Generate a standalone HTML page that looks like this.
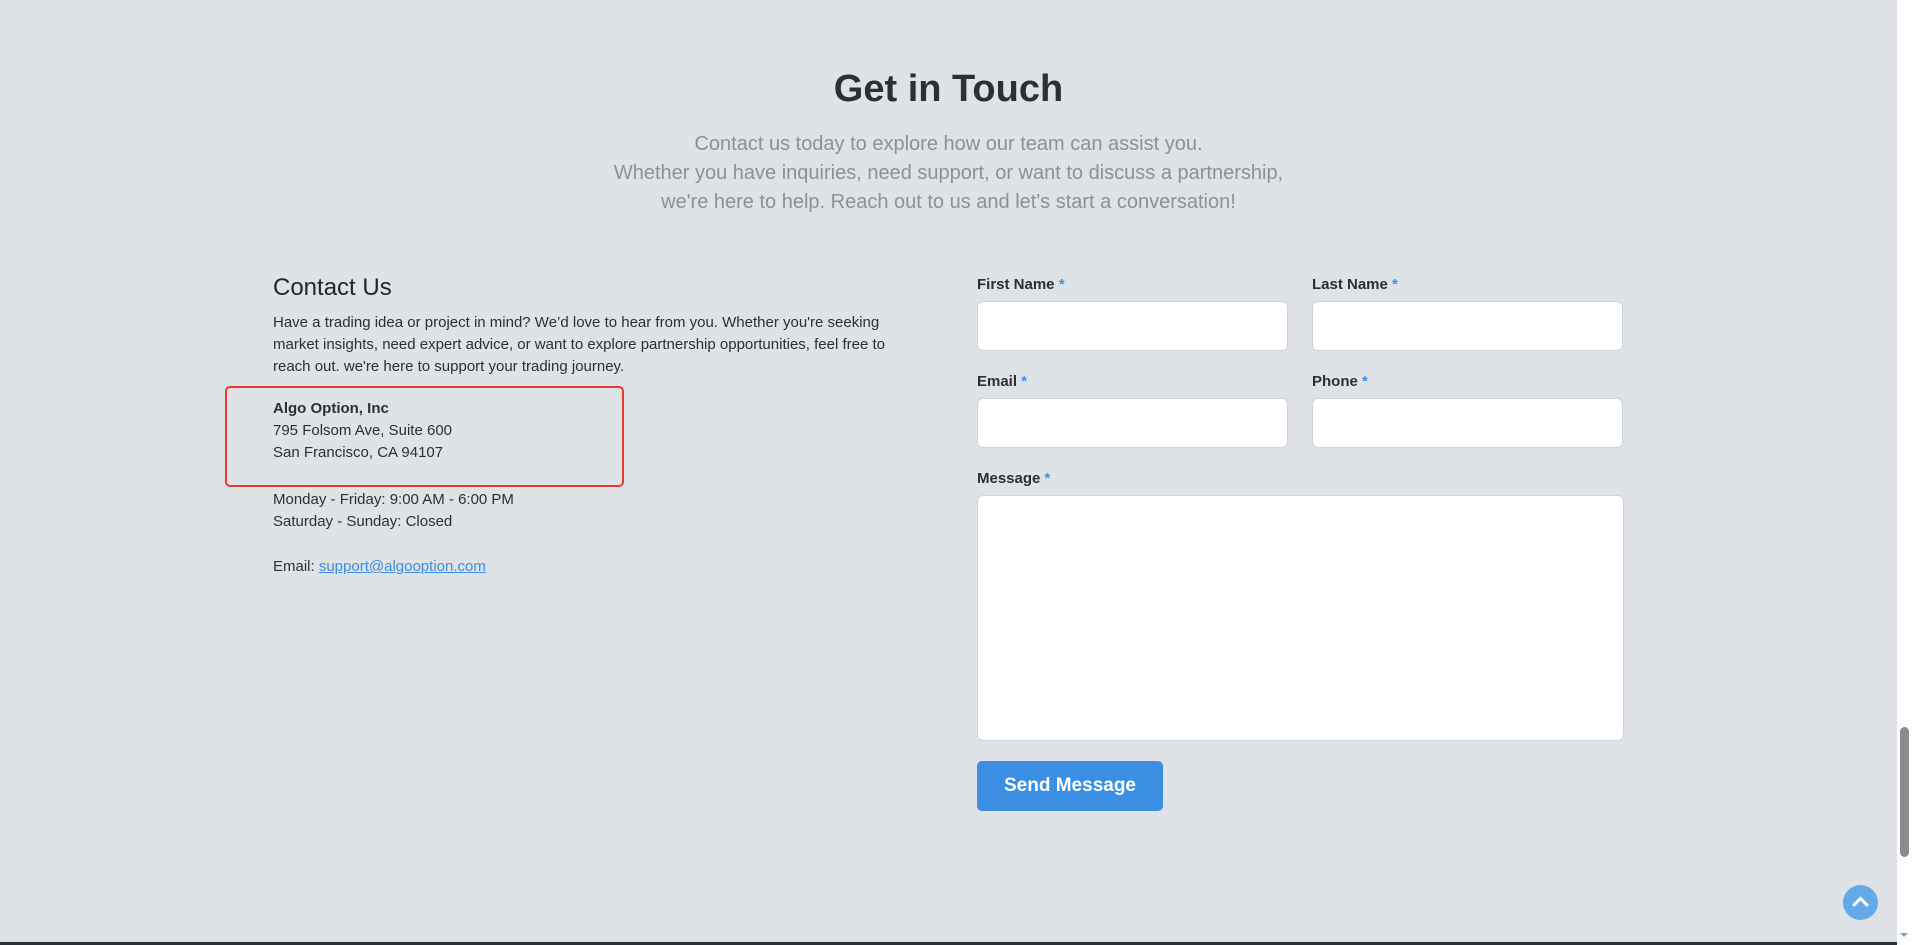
<!DOCTYPE html>
<html><head><meta charset="utf-8"><style>
*{box-sizing:border-box;margin:0;padding:0}
html,body{width:1912px;height:945px;overflow:hidden;background:#dfe2e7;font-family:"Liberation Sans",sans-serif;color:#2b2f33}
.abs{position:absolute}
h1{position:absolute;left:0;width:1897px;text-align:center;top:68px;font-size:38px;font-weight:bold;color:#2b3036}
.sub{position:absolute;left:0;width:1897px;text-align:center;top:130px;font-size:20px;line-height:29px;color:#8a9199}
h2{position:absolute;left:273px;top:274px;font-size:24px;font-weight:normal;color:#22262a}
.p{position:absolute;left:273px;font-size:15px;line-height:22px;color:#2b2f33}
.box{position:absolute;left:225px;top:386px;width:399px;height:101px;border:2px solid #e53b2c;border-radius:5px}
label{position:absolute;font-size:15px;font-weight:bold;color:#2b2f33}
label span{color:#3c8fe6}
.in{position:absolute;background:#fff;border:1px solid #cfd4da;border-radius:6px}
.btn{position:absolute;left:977px;top:761px;width:186px;height:50px;background:#3a8fe2;border-radius:5px;color:#fff;font-size:19px;font-weight:bold;text-align:center;line-height:50px}
a{color:#3a8fe2}
</style></head><body>
<h1>Get in Touch</h1>
<div class="sub">Contact us today to explore how our team can assist you.<br>Whether you have inquiries, need support, or want to discuss a partnership,<br>we're here to help. Reach out to us and let's start a conversation!</div>
<h2>Contact Us</h2>
<div class="p" style="top:312px;width:650px">Have a trading idea or project in mind? We’d love to hear from you. Whether you're seeking market insights, need expert advice, or want to explore partnership opportunities, feel free to reach out. we're here to support your trading journey.</div>
<div class="box"></div>
<div class="p" style="top:398px"><b>Algo Option, Inc</b><br>795 Folsom Ave, Suite 600<br>San Francisco, CA 94107</div>
<div class="p" style="top:489px">Monday - Friday: 9:00 AM - 6:00 PM<br>Saturday - Sunday: Closed</div>
<div class="p" style="top:556px">Email: <a href="#">support@algooption.com</a></div>

<label style="left:977px;top:276px">First Name <span>*</span></label>
<div class="in" style="left:977px;top:301px;width:311px;height:50px"></div>
<label style="left:1312px;top:276px">Last Name <span>*</span></label>
<div class="in" style="left:1312px;top:301px;width:311px;height:50px"></div>
<label style="left:977px;top:373px">Email <span>*</span></label>
<div class="in" style="left:977px;top:398px;width:311px;height:50px"></div>
<label style="left:1312px;top:373px">Phone <span>*</span></label>
<div class="in" style="left:1312px;top:398px;width:311px;height:50px"></div>
<label style="left:977px;top:470px">Message <span>*</span></label>
<div class="in" style="left:977px;top:495px;width:647px;height:246px"></div>
<div class="btn">Send Message</div>

<div class="abs" style="left:1843px;top:885px;width:35px;height:35px;border-radius:50%;background:#64aae8"></div>
<svg class="abs" style="left:1843px;top:885px" width="35" height="35"><path d="M11 20 L17.5 13.5 L24 20" stroke="#fff" stroke-width="3" fill="none" stroke-linecap="round"/></svg>
<div class="abs" style="left:1897px;top:0;width:15px;height:945px;background:#fdfdfd"></div>
<div class="abs" style="left:1900px;top:727px;width:9px;height:130px;border-radius:5px;background:#8c8c8c"></div>
<div class="abs" style="left:1900px;top:933px;width:0;height:0;border-left:4px solid transparent;border-right:4px solid transparent;border-top:4px solid #999"></div>
<div class="abs" style="left:0;top:942px;width:1897px;height:3px;background:#2b3036"></div>
</body></html>
